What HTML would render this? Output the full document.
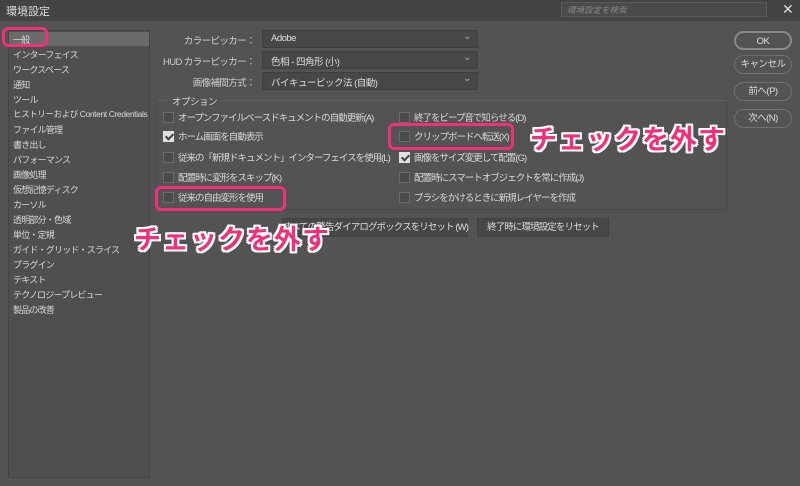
<!DOCTYPE html>
<html><head><meta charset="utf-8"><style>
*{margin:0;padding:0;box-sizing:border-box}
body{width:800px;height:486px;background:#535353;font-family:"Liberation Sans","Noto Sans CJK JP",sans-serif;color:#d6d6d6;font-size:10px;position:relative;overflow:hidden}
.a{position:absolute;white-space:nowrap}
.title{left:0;top:0;width:800px;height:21px;background:#434343}
.side{left:8px;top:30px;width:142px;height:448px;background:#4f4f4f;border:1px solid #444}
.item{position:absolute;left:4px;font-size:9px;letter-spacing:-0.8px;color:#d8d8d8}
.dd{height:18px;width:216px;left:262px;background:#474747;border:1px solid #3f3f3f;padding:2px 8px;font-size:9.5px;letter-spacing:-0.5px;color:#ddd}
.dd:after{content:"⌄";position:absolute;right:6px;top:0px;font-size:10px;color:#aaa}
.lbl{font-size:9.5px;letter-spacing:-0.6px;color:#cfcfcf;text-align:right;width:150px;left:105px}
.cb{width:11px;height:11px;border:1px solid #6a6a6a;background:#4a4a4a;position:absolute}
.cb.on{background:#e0e0e0;border-color:#e0e0e0}
.cb.on:after{content:"";position:absolute;left:3px;top:0px;width:3px;height:6px;border:solid #444;border-width:0 2px 2px 0;transform:rotate(45deg)}
.opt{font-size:9.5px;letter-spacing:-1px;color:#d8d8d8}
.btn{border:1px solid #707070;border-radius:10px;width:58px;height:19px;left:734px;text-align:center;font-size:9.5px;letter-spacing:-0.5px;line-height:17px;color:#ddd}
.fb{background:#474747;border:1px solid #424242;height:19px;top:218px;font-size:9.5px;letter-spacing:-0.9px;line-height:17px;text-align:center;color:#ddd}
.pink{border:3px solid #f0307a;border-radius:6px}
.big{font-size:27px;font-weight:bold;color:#f0307a;text-shadow:-2px -2px 0 #fff,2px -2px 0 #fff,-2px 2px 0 #fff,2px 2px 0 #fff,0 2px 0 #fff,0 -2px 0 #fff,2px 0 0 #fff,-2px 0 0 #fff;letter-spacing:1px}
</style></head><body>
<div class="a title"></div>
<div class="a" style="left:6px;top:3px;font-size:11px;color:#ddd">環境設定</div>
<div class="a" style="left:561px;top:2px;width:206px;height:15px;background:#4a4a4a;border:1px solid #5a5a5a;font-size:8.5px;color:#888;font-style:italic;padding:1px 5px">環境設定を検索</div>
<div class="a" style="left:782px;top:1px;font-size:14px;color:#ddd">✕</div>

<div class="a side">
<div style="position:absolute;left:0;top:1px;width:140px;height:14px;background:#6a6a6a"></div>
<div class="item" style="top:2px">一般</div>
<div class="item" style="top:17px">インターフェイス</div>
<div class="item" style="top:32px">ワークスペース</div>
<div class="item" style="top:47px">通知</div>
<div class="item" style="top:62px">ツール</div>
<div class="item" style="top:77px;font-size:8.5px;letter-spacing:-0.4px">ヒストリーおよび Content Credentials</div>
<div class="item" style="top:92px">ファイル管理</div>
<div class="item" style="top:107px">書き出し</div>
<div class="item" style="top:122px">パフォーマンス</div>
<div class="item" style="top:137px">画像処理</div>
<div class="item" style="top:152px">仮想記憶ディスク</div>
<div class="item" style="top:167px">カーソル</div>
<div class="item" style="top:182px">透明部分・色域</div>
<div class="item" style="top:197px">単位・定規</div>
<div class="item" style="top:212px">ガイド・グリッド・スライス</div>
<div class="item" style="top:227px">プラグイン</div>
<div class="item" style="top:242px">テキスト</div>
<div class="item" style="top:257px">テクノロジープレビュー</div>
<div class="item" style="top:272px">製品の改善</div>
</div>
<div class="a pink" style="left:2px;top:27px;width:46px;height:20px"></div>

<div class="a lbl" style="top:33px">カラーピッカー：</div>
<div class="a lbl" style="top:54px">HUD カラーピッカー：</div>
<div class="a lbl" style="top:75px">画像補間方式：</div>
<div class="a dd" style="top:30px">Adobe</div>
<div class="a dd" style="top:51px">色相 - 四角形 (小)</div>
<div class="a dd" style="top:72px">バイキュービック法 (自動)</div>

<div class="a" style="left:156px;top:100px;width:571px;height:110px;border:1px solid #4a4a4a;border-top-color:#5f5f5f"></div>
<div class="a" style="left:168px;top:94px;background:#535353;padding:0 4px;font-size:9.5px;letter-spacing:-0.5px">オプション</div>

<div class="cb" style="left:163px;top:112px"></div><div class="a opt" style="left:178px;top:110px">オープンファイルベースドキュメントの自動更新(A)</div>
<div class="cb on" style="left:163px;top:131px"></div><div class="a opt" style="left:178px;top:129px">ホーム画面を自動表示</div>
<div class="cb" style="left:163px;top:152px"></div><div class="a opt" style="left:178px;top:150px">従来の「新規ドキュメント」インターフェイスを使用(L)</div>
<div class="cb" style="left:163px;top:172px"></div><div class="a opt" style="left:178px;top:170px">配置時に変形をスキップ(K)</div>
<div class="cb" style="left:163px;top:192px"></div><div class="a opt" style="left:178px;top:190px">従来の自由変形を使用</div>

<div class="cb" style="left:399px;top:112px"></div><div class="a opt" style="left:414px;top:110px">終了をビープ音で知らせる(D)</div>
<div class="cb" style="left:399px;top:131px"></div><div class="a opt" style="left:414px;top:129px">クリップボードへ転送(X)</div>
<div class="cb on" style="left:399px;top:152px"></div><div class="a opt" style="left:414px;top:150px">画像をサイズ変更して配置(G)</div>
<div class="cb" style="left:399px;top:172px"></div><div class="a opt" style="left:414px;top:170px">配置時にスマートオブジェクトを常に作成(J)</div>
<div class="cb" style="left:399px;top:192px"></div><div class="a opt" style="left:414px;top:190px">ブラシをかけるときに新規レイヤーを作成</div>

<div class="a fb" style="left:282px;width:186px">すべての警告ダイアログボックスをリセット (W)</div>
<div class="a fb" style="left:477px;width:132px">終了時に環境設定をリセット</div>

<div class="a btn" style="top:31px;border-width:2px;border-color:#888">OK</div>
<div class="a btn" style="top:55px">キャンセル</div>
<div class="a btn" style="top:82px">前へ(P)</div>
<div class="a btn" style="top:109px">次へ(N)</div>

<div class="a pink" style="left:388px;top:123px;width:126px;height:27px"></div>
<div class="a pink" style="left:155px;top:186px;width:131px;height:25px"></div>
<div class="a big" style="left:530px;top:118px">チェックを外す</div>
<div class="a big" style="left:134px;top:218px">チェックを外す</div>
</body></html>
